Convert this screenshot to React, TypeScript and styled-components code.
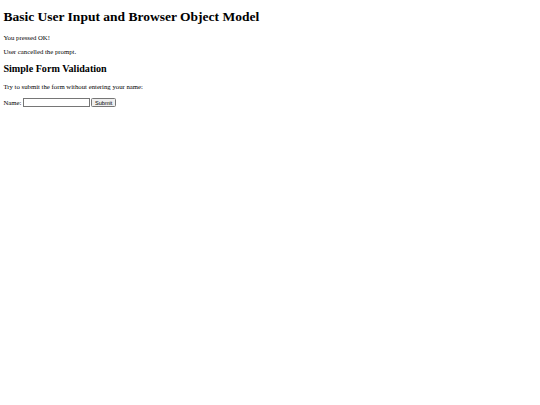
import React from "react";
import styled, { createGlobalStyle } from "styled-components";

const Global = createGlobalStyle`
  html, body { background: #fff; margin: 0; }
  body {
    font-family: "Liberation Serif", "Times New Roman", serif;
    color: #000;
  }
`;

/* The reference is a 1280x960 page shown at 540x405, so the whole page is scaled. */
const Page = styled.div`
  zoom: 0.421875;
  margin: 8px;
  font-size: 16px;
  font-family: "Liberation Serif", "Times New Roman", serif;
`;

const Title = styled.h1`
  font-size: 32px;
  font-weight: bold;
  margin: 21.44px 0;
`;

const SubTitle = styled.h2`
  font-size: 24px;
  font-weight: bold;
  margin: 19.92px 0;
`;

const Text = styled.p`
  font-size: 16px;
  margin: 16px 0;
`;

const Form = styled.form`
  font-size: 16px;
  display: block;
  margin-top: 20px;
`;

const Label = styled.label`
  margin-right: 4px;
`;

const NameInput = styled.input`
  box-sizing: border-box;
  width: 159px;
  height: 22px;
  font-family: "Liberation Sans", Arial, sans-serif;
  font-size: 13.333px;
  margin: 0 3px 0 0;
`;

const SubmitButton = styled.button`
  font-family: "Liberation Sans", Arial, sans-serif;
  font-size: 13.333px;
  margin: 0;
`;

export default function App() {
  return (
    <>
      <Global />
      <Page>
        <Title>Basic User Input and Browser Object Model</Title>
        <Text>You pressed OK!</Text>
        <Text>User cancelled the prompt.</Text>
        <SubTitle>Simple Form Validation</SubTitle>
        <Text>Try to submit the form without entering your name:</Text>
        <Form onSubmit={(e) => e.preventDefault()}>
          <Label htmlFor="name">Name:</Label>
          <NameInput id="name" type="text" />
          <SubmitButton type="submit">Submit</SubmitButton>
        </Form>
      </Page>
    </>
  );
}
